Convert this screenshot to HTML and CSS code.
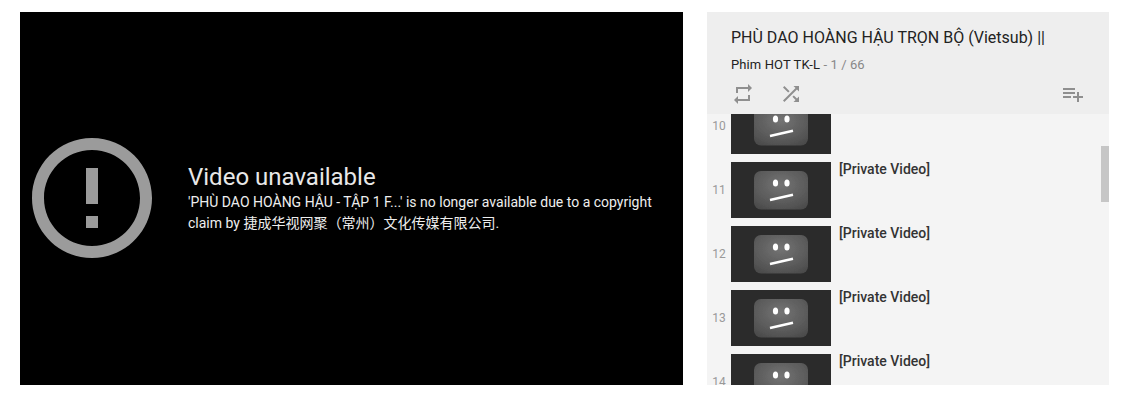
FILE: index.html
```html
<!DOCTYPE html>
<html lang="en">
<head>
<meta charset="utf-8">
<title>Video unavailable</title>
<link rel="stylesheet" href="styles.css">
</head>
<body>
<svg class="defs" width="0" height="0" aria-hidden="true">
  <defs>
    <radialGradient id="faceFill" cx="0.5" cy="0.35" r="0.75">
      <stop offset="0" stop-color="#747474"/>
      <stop offset="0.7" stop-color="#585858"/>
      <stop offset="1" stop-color="#4a4a4a"/>
    </radialGradient>
    <filter id="soft" x="-10%" y="-10%" width="120%" height="120%"><feGaussianBlur stdDeviation="0.7"/></filter>
    <symbol id="sad" viewBox="0 0 100 56">
      <rect width="100" height="56" fill="#2b2b2b"/>
      <g filter="url(#soft)">
        <rect x="23" y="9" width="54" height="38.500" rx="7" fill="url(#faceFill)"/>
        <ellipse cx="44.500" cy="21" rx="2.600" ry="3.600" fill="#fff"/>
        <ellipse cx="56" cy="21" rx="2.600" ry="3.600" fill="#fff"/>
        <path d="M39 38L62 32.800" stroke="#fff" stroke-width="2.500" fill="none"/>
      </g>
    </symbol>
  </defs>
</svg>
<main class="page">
  <section class="player">
    <svg class="error-icon" viewBox="0 0 24 24"><path d="M11 15h2v2h-2zm0-8h2v6h-2zm.99-5C6.470 2 2 6.480 2 12s4.470 10 9.990 10C17.520 22 22 17.520 22 12S17.520 2 11.990 2zM12 20c-4.420 0-8-3.580-8-8s3.580-8 8-8 8 3.580 8 8-3.580 8-8 8z"/></svg>
    <div class="message">
      <h1 class="message-title">Video unavailable</h1>
      <p class="message-body">'PHÙ DAO HOÀNG HẬU - TẬP 1 F...' is no longer available due to a copyright claim by 捷成华视网聚（常州）文化传媒有限公司.</p>
    </div>
  </section>
  <aside class="playlist">
    <header class="playlist-head">
      <h2 class="playlist-title">PHÙ DAO HOÀNG HẬU TRỌN BỘ (Vietsub) ||</h2>
      <p class="playlist-meta"><span class="owner">Phim HOT TK-L</span> - 1 / 66</p>
      <div class="actions">
        <svg class="action" viewBox="0 0 24 24"><path d="M7 7h10v3l4-4-4-4v3H5v6h2V7zm10 10H7v-3l-4 4 4 4v-3h12v-6h-2v4z"/></svg>
        <svg class="action" viewBox="0 0 24 24"><path d="M10.590 9.170L5.410 4 4 5.410l5.170 5.170 1.420-1.410zM14.500 4l2.040 2.040L4 18.590 5.410 20 17.960 7.460 20 9.500V4h-5.500zm.33 9.410l-1.410 1.410 3.130 3.130L14.500 20H20v-5.500l-2.040 2.040-3.130-3.130z"/></svg>
        <svg class="action action-end" viewBox="0 0 24 24"><path d="M14 10H2v2h12v-2zm0-4H2v2h12V6zm4 8v-4h-2v4h-4v2h4v4h2v-4h4v-2h-4zM2 16h8v-2H2v2z"/></svg>
      </div>
    </header>
    <div class="list">
      <ol class="items">
        <li class="item"><span class="index">10</span><svg class="thumb"><use href="#sad"/></svg></li>
        <li class="item"><span class="index">11</span><svg class="thumb"><use href="#sad"/></svg><span class="item-title">[Private Video]</span></li>
        <li class="item"><span class="index">12</span><svg class="thumb"><use href="#sad"/></svg><span class="item-title">[Private Video]</span></li>
        <li class="item"><span class="index">13</span><svg class="thumb"><use href="#sad"/></svg><span class="item-title">[Private Video]</span></li>
        <li class="item"><span class="index">14</span><svg class="thumb"><use href="#sad"/></svg><span class="item-title">[Private Video]</span></li>
      </ol>
      <div class="scrollbar"></div>
    </div>
  </aside>
</main>
</body>
</html>
```
FILE: styles.css
```css
* { box-sizing: border-box; }
html, body { margin: 0; height: 100%; background: #fff; overflow: hidden; }
body { font-family: Roboto, "Noto Sans CJK SC", sans-serif; }
.defs { position: absolute; }
.page { display: flex; gap: 24px; padding: 12px 0 0 20px; height: 385px; }

.player { width: 663px; height: 373px; padding-bottom: 1px; background: #000; display: flex; align-items: center; gap: 24px; }
.error-icon { width: 144px; height: 144px; fill: #9b9b9b; flex: none; }
.message { width: 470px; margin-top: 1px; }
.message-title { margin: 0 0 1px; font-size: 24px; line-height: 28px; font-weight: 400; color: #e8e8e8; }
.message-body { margin: 0; font-size: 14px; line-height: 21px; font-weight: 400; color: #eee; }

.playlist { width: 402px; height: 373px; display: flex; flex-direction: column; background: #f4f4f4; }
.playlist-head { height: 102px; flex: none; background: #eee; padding: 15px 24px 0; }
.playlist-title { margin: 0; font-size: 16px; line-height: 22px; font-weight: 400; color: #222; white-space: nowrap; }
.playlist-meta { margin: 6px 0 0; font-size: 13px; line-height: 20px; letter-spacing: 0.1px; color: #888; }
.owner { color: #222; }
.actions { display: flex; gap: 24px; margin-top: 7px; }
.action { width: 24px; height: 24px; fill: #8f8f8f; }
.action-end { margin-left: auto; }

.list { position: relative; flex: 1; overflow: hidden; }
.items { list-style: none; margin: -16px 0 0; padding: 0; }
.item { display: flex; height: 64px; padding-bottom: 8px; }
.index { width: 24px; flex: none; align-self: center; text-align: center; font-size: 12px; line-height: 14px; color: #999; margin-top: -1px; }
.thumb { width: 100px; height: 56px; flex: none; display: block; }
.item-title { margin-left: 8px; font-size: 14px; line-height: 14px; font-weight: 500; color: #333; }
.scrollbar { position: absolute; top: 32px; right: 0; width: 8px; height: 56px; background: #c6c6c6; }
```
